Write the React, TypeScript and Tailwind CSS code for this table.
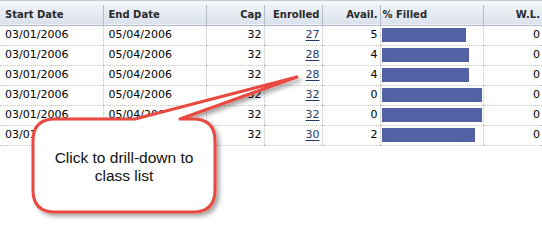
import React from 'react';

const rows = [
  { start: '03/01/2006', end: '05/04/2006', cap: 32, enrolled: 27, avail: 5, wl: 0 },
  { start: '03/01/2006', end: '05/04/2006', cap: 32, enrolled: 28, avail: 4, wl: 0 },
  { start: '03/01/2006', end: '05/04/2006', cap: 32, enrolled: 28, avail: 4, wl: 0 },
  { start: '03/01/2006', end: '05/04/2006', cap: 32, enrolled: 32, avail: 0, wl: 0 },
  { start: '03/01/2006', end: '05/04/2006', cap: 32, enrolled: 32, avail: 0, wl: 0 },
  { start: '03/01/2006', end: '05/04/2006', cap: 32, enrolled: 30, avail: 2, wl: 0 },
];

const th = 'h-[20px] p-0 font-bold text-[10px] text-[#2a2a2a] border-l border-[#b4bcc8] first:border-l-0 align-middle';
const td = 'h-[20px] p-0 text-[11px] text-black border-l border-b border-dotted border-[#c4c4c4] first:border-l-0 align-middle';

export default function App() {
  return (
    <div className="relative w-[542px] h-[245px] bg-white overflow-hidden font-['DejaVu_Sans',sans-serif]">
      {/* Roster table */}
      <div className="border-t border-[#c8c8c8] pt-[4px] bg-[#f5f7fa]">
        <table className="table-fixed border-collapse w-[542px] bg-white">
          <colgroup>
            <col className="w-[103px]" />
            <col className="w-[103px]" />
            <col className="w-[58px]" />
            <col className="w-[58px]" />
            <col className="w-[58px]" />
            <col className="w-[103px]" />
            <col className="w-[59px]" />
          </colgroup>
          <thead>
            <tr className="bg-gradient-to-b from-[#eef2f8] to-[#dbe2ec] border-b border-[#b4bcc8]">
              <th className={`${th} text-left pl-[5px]`}>Start Date</th>
              <th className={`${th} text-left pl-[5px]`}>End Date</th>
              <th className={`${th} text-right pr-[2px]`}>Cap</th>
              <th className={`${th} text-right pr-[2px]`}>Enrolled</th>
              <th className={`${th} text-right pr-[2px]`}>Avail.</th>
              <th className={`${th} text-left pl-[2px]`}>% Filled</th>
              <th className={`${th} text-right pr-[2px]`}>W.L.</th>
            </tr>
          </thead>
          <tbody>
            {rows.map((r, i) => (
              <tr key={i}>
                <td className={`${td} pl-[5px]`}>{r.start}</td>
                <td className={`${td} pl-[5px]`}>{r.end}</td>
                <td className={`${td} text-right pr-[2px]`}>{r.cap}</td>
                <td className={`${td} text-right pr-[2px]`}>
                  <a className="text-[#283868] underline underline-offset-[2px]">{r.enrolled}</a>
                </td>
                <td className={`${td} text-right pr-[2px]`}>{r.avail}</td>
                <td className={`${td} pl-[1px]`}>
                  <div className="h-[14px] bg-[#5262a4]" style={{ width: `${(r.enrolled / r.cap) * 100}px` }} />
                </td>
                <td className={`${td} text-right pr-[2px]`}>{r.wl}</td>
              </tr>
            ))}
          </tbody>
        </table>
      </div>

      {/* Callout */}
      <svg className="absolute left-0 top-0 pointer-events-none" width="542" height="245" viewBox="0 0 542 245">
        <defs>
          <filter id="shadow" x="-20%" y="-20%" width="140%" height="150%">
            <feDropShadow dx="3" dy="3" stdDeviation="2" floodColor="#000" floodOpacity="0.35" />
          </filter>
        </defs>
        <path
          d="M 55 119 L 135 119 L 297 77 L 180 119 L 193 119 Q 215 119 215 141 L 215 190 Q 215 212 193 212 L 55 212 Q 33 212 33 190 L 33 141 Q 33 119 55 119 Z"
          fill="#fff"
          stroke="#e8483f"
          strokeWidth="3"
          strokeLinejoin="round"
          filter="url(#shadow)"
        />
      </svg>
      <div className="absolute left-[33px] top-[120px] w-[182px] h-[93px] flex items-center justify-center text-center font-['Liberation_Sans',Arial,sans-serif] text-[15.5px] leading-[18px] text-[#111]">
        Click to drill-down to<br />class list
      </div>
    </div>
  );
}
